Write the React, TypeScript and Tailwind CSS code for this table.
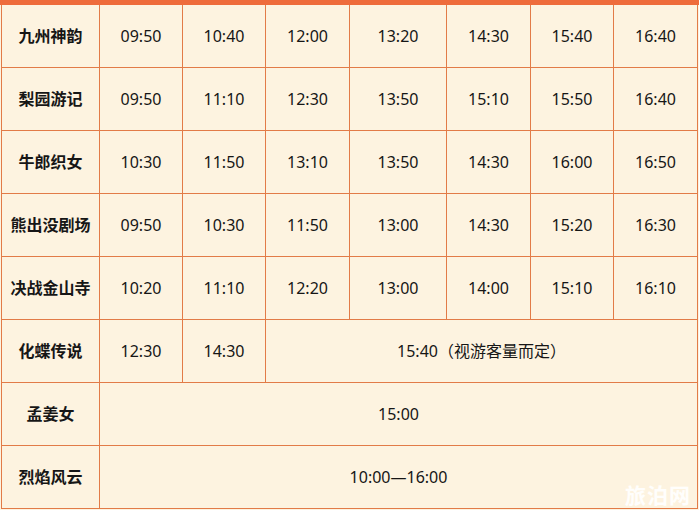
import React from "react";

type Row = { name: string; times: string[]; span?: string };

const rows: Row[] = [
  { name: "九州神韵", times: ["09:50", "10:40", "12:00", "13:20", "14:30", "15:40", "16:40"] },
  { name: "梨园游记", times: ["09:50", "11:10", "12:30", "13:50", "15:10", "15:50", "16:40"] },
  { name: "牛郎织女", times: ["10:30", "11:50", "13:10", "13:50", "14:30", "16:00", "16:50"] },
  { name: "熊出没剧场", times: ["09:50", "10:30", "11:50", "13:00", "14:30", "15:20", "16:30"] },
  { name: "决战金山寺", times: ["10:20", "11:10", "12:20", "13:00", "14:00", "15:10", "16:10"] },
];

const cell = "h-[62px] bg-[#fdf3e0] flex items-center justify-center text-[16px] text-[#161616]";
const nameCell = `${cell} font-bold`;

export default function App() {
  return (
    <div
      className="relative w-[699px] h-[510px] bg-[#fdf3e0] overflow-hidden"
      style={{ fontFamily: '"Noto Sans", "Noto Sans CJK SC", sans-serif' }}
    >
      {/* top bar */}
      <div className="h-[5px] bg-[#ee6b3b]" />

      <div className="ml-px w-[697px] grid grid-cols-[97px_82px_82px_83px_96px_83px_82px_83px] gap-px bg-[#e27b47] px-px pb-px">
        {rows.map((r) => (
          <React.Fragment key={r.name}>
            <div className={nameCell}>{r.name}</div>
            {r.times.map((t, i) => (
              <div key={i} className={cell}>
                {t}
              </div>
            ))}
          </React.Fragment>
        ))}

        <div className={nameCell}>化蝶传说</div>
        <div className={cell}>12:30</div>
        <div className={cell}>14:30</div>
        <div className={`${cell} col-span-5`}>15:40（视游客量而定）</div>

        <div className={nameCell}>孟姜女</div>
        <div className={`${cell} col-span-7`}>15:00</div>

        <div className={nameCell}>烈焰风云</div>
        <div className={`${cell} col-span-7`}>10:00—16:00</div>
      </div>

      {/* watermark */}
      <div className="absolute right-[8px] bottom-[4px] text-[21px] font-bold text-white/90 tracking-[1px] leading-none">
        旅泊网
      </div>
    </div>
  );
}
